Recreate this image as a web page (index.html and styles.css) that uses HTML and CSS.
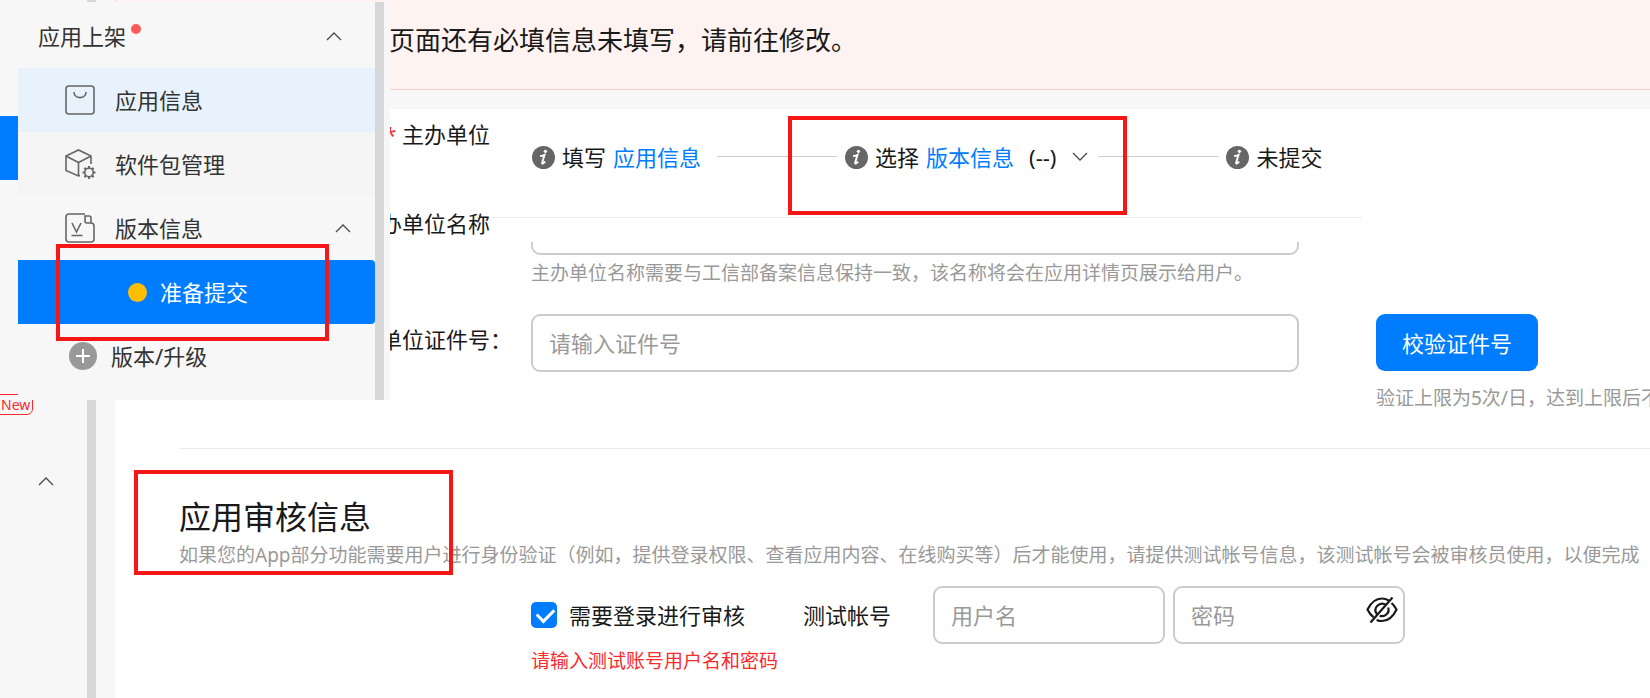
FILE: index.html
```html
<!DOCTYPE html>
<html lang="zh-CN">
<head>
    <meta charset="UTF-8">
    <meta name="viewport" content="width=device-width, initial-scale=1.0">
    <title>应用上架</title>
    <link rel="stylesheet" href="styles.css">
</head>
<body>
    <div class="page">
        <aside class="rail">
            <div class="rail-active"></div>
            <span class="badge-new">New</span>
            <svg class="chevron rail-chevron" viewBox="0 0 16 10"><path d="M1 9 8 2l7 7"/></svg>
        </aside>
        <div class="scrollbar"></div>

        <main class="main">
            <div class="alert">页面还有必填信息未填写，请前往修改。</div>

            <div class="content">
                <div class="top">
                    <div class="top-labels">
                        <span><span class="required">*</span> 主办单位</span>
                        <label for="org-name">主办单位名称</label>
                    </div>
                    <div class="steps">
                        <div class="step">
                            <svg class="info" viewBox="0 0 24 24"><circle cx="12" cy="12" r="12"/><circle class="mark" cx="14" cy="5.500" r="1.7"/><path d="M8.500 10.500c1.800-.2 3.200-.8 4.600-1.300l-2.500 8.300c-.3 1.500 1.200.9 3.200-1.200"/></svg>
                            <span>填写</span><a href="#">应用信息</a>
                        </div>
                        <div class="line"></div>
                        <div class="step">
                            <svg class="info" viewBox="0 0 24 24"><circle cx="12" cy="12" r="12"/><circle class="mark" cx="14" cy="5.500" r="1.7"/><path d="M8.500 10.500c1.800-.2 3.200-.8 4.600-1.300l-2.500 8.300c-.3 1.500 1.200.9 3.200-1.200"/></svg>
                            <span>选择</span><a href="#">版本信息</a>
                            <button type="button" class="version">(--) <svg class="chevron" viewBox="0 0 16 10"><path d="m1 1 7 7 7-7"/></svg></button>
                            <div class="mark-box mark-step"></div>
                        </div>
                        <div class="line"></div>
                        <div class="step">
                            <svg class="info" viewBox="0 0 24 24"><circle cx="12" cy="12" r="12"/><circle class="mark" cx="14" cy="5.500" r="1.7"/><path d="M8.500 10.500c1.800-.2 3.200-.8 4.600-1.300l-2.500 8.300c-.3 1.500 1.200.9 3.200-1.200"/></svg>
                            <span>未提交</span>
                        </div>
                    </div>
                </div>

                <!-- only the lower edge of this field shows under the steps -->
                <div class="name-field">
                    <div class="name-clip"><input type="text" id="org-name" class="input"></div>
                    <p class="hint">主办单位名称需要与工信部备案信息保持一致，该名称将会在应用详情页展示给用户。</p>
                </div>

                <div class="id-row">
                    <label class="id-label" for="org-id">主办单位证件号：</label>
                    <input type="text" id="org-id" class="input id-input" placeholder="请输入证件号">
                    <div class="verify">
                        <button type="button" class="btn">校验证件号</button>
                        <p class="hint">验证上限为5次/日，达到上限后不</p>
                    </div>
                </div>

                <section class="review">
                    <div class="mark-box mark-review"></div>
                    <h2>应用审核信息</h2>
                    <p class="hint">如果您的App部分功能需要用户进行身份验证（例如，提供登录权限、查看应用内容、在线购买等）后才能使用，请提供测试帐号信息，该测试帐号会被审核员使用，以便完成</p>
                    <div class="account">
                        <label class="check"><input type="checkbox" checked>需要登录进行审核</label>
                        <label class="account-label" for="user">测试帐号</label>
                        <input type="text" id="user" class="input account-input" placeholder="用户名">
                        <div class="password account-input">
                            <input type="password" class="input" placeholder="密码" aria-label="密码">
                            <button type="button" class="eye" aria-label="显示密码">
                                <svg viewBox="0 0 32 28"><path d="M22.5 4.3C20.700 3.300 18.500 2.500 16 2.500 9.500 2.500 5 6.500 1.500 13.500c1.500 3.200 3.500 5.800 6 7.700M25.500 7c2 1.700 3.600 3.900 5 6.500-3.500 7.500-8 11.500-14.500 11.500-2 0-3.800-.4-5.400-1.100M19.500 8.700a6.500 6.500 0 0 0-8.800 9.200M22.200 11.500a6.500 6.500 0 0 1-8.500 8.200M26.500 1.500 4.500 26.500"/></svg>
                            </button>
                        </div>
                    </div>
                    <p class="error">请输入测试账号用户名和密码</p>
                </section>
            </div>
        </main>

        <nav class="menu">
            <div class="menu-list">
                <div class="menu-head">
                    <span class="menu-title">应用上架</span>
                    <svg class="chevron" viewBox="0 0 16 10"><path d="M1 9 8 2l7 7"/></svg>
                </div>
                <a href="#" class="menu-item hover">
                    <svg class="icon" viewBox="0 0 30 30"><rect x="1" y="1" width="28" height="28" rx="3"/><path d="M9 7c0 7.500 12 7.500 12 0"/></svg>
                    应用信息
                </a>
                <a href="#" class="menu-item shade">
                    <svg class="icon" viewBox="0 0 30 30"><path d="M15 26.500 13.500 27 1 21.500V7L13.500 1 26 7v8M1 7l12.500 6.500L26 7M13.500 13.500V27"/><circle cx="24" cy="23.500" r="4.200"/><path stroke-width="2.200" d="M24 17v2.300M24 27.700V30M17.500 23.500h2.300M28.200 23.500h2.300M19.400 18.900l1.600 1.600M27 26.500l1.600 1.600M28.600 18.900 27 20.500M21 26.500l-1.600 1.600"/></svg>
                    软件包管理
                </a>
                <a href="#" class="menu-item">
                    <svg class="icon" viewBox="0 0 30 30"><path d="M20 1H4a3 3 0 0 0-3 3v22a3 3 0 0 0 3 3h22a3 3 0 0 0 3-3V13a3 3 0 0 0-3-3h-4a2 2 0 0 1-2-2V3h4a2 2 0 0 1 2 2v5M7 10l4.500 9 4.500-9M6.500 22.500h11"/></svg>
                    版本信息
                    <svg class="chevron" viewBox="0 0 16 10"><path d="M1 9 8 2l7 7"/></svg>
                </a>
                <a href="#" class="menu-item active">
                    <span class="dot"></span>
                    准备提交
                    <span class="mark-box mark-menu"></span>
                </a>
                <a href="#" class="menu-item add">
                    <svg class="plus" viewBox="0 0 28 28"><circle cx="14" cy="14" r="14"/><path d="M7 14h14M14 7v14"/></svg>
                    版本/升级
                </a>
            </div>
            <div class="scrollbar"></div>
        </nav>
    </div>
</body>
</html>
```
FILE: styles.css
```css
*{
    box-sizing: border-box;
    margin: 0;
    padding: 0;
}
body{
    font-family: "Noto Sans", "Noto Sans CJK SC", sans-serif;
    font-size: 22px;
    line-height: 30px;
    color: #191919;
    background: #f7f7f7;
}
input,button{
    font: inherit;
    color: inherit;
}
button{
    border: none;
    background: none;
}
a{
    color: #007dff;
    text-decoration: none;
}
.page{
    position: relative;
    display: flex;
    min-height: 100vh;
    overflow: hidden;
    white-space: nowrap;
}
.scrollbar{
    flex: none;
    width: 9px;
    background: #d7d7d9;
}
.chevron{
    width: 16px;
    height: 10px;
    fill: none;
    stroke: #4a4a4a;
    stroke-width: 1.3;
}

/* left rail */
.rail{
    flex: none;
    width: 87px;
    padding-top: 116px;
    display: flex;
    flex-direction: column;
    align-items: flex-start;
}
.rail-active{
    width: 100%;
    height: 64px;
    background: #007dff;
}
.badge-new{
    margin: 214px 0 61px -6px;
    padding: 0 2px 0 6px;
    border: 1px solid #fa2a2d;
    border-radius: 6px;
    color: #fa2a2d;
    font-size: 14px;
    line-height: 19px;
}
.rail-chevron{
    margin-left: 38px;
}

/* main column */
.main{
    flex: 1;
    min-width: 0;
    margin-left: 19px;
    display: flex;
    flex-direction: column;
}
.alert{
    height: 90px;
    padding: 23px 0 0 273px;
    border-left: 1px solid #f9cfcd;
    border-bottom: 1px solid #f9cfcd;
    background: #fef3f1;
    font-size: 26px;
    line-height: 34px;
}
.content{
    flex: 1;
    margin-top: 19px;
    background: #fff;
}
.top{
    display: flex;
    height: 133px;
}
.top-labels{
    flex: none;
    width: 377px;
    padding: 10px 2px 0 0;
    display: flex;
    flex-direction: column;
    align-items: flex-end;
    gap: 59px;
}
.required{
    color: #fa2a2d;
}
.steps{
    flex: 0 1 870px;
    height: 109px;
    padding: 33px 0 0 40px;
    display: flex;
    align-items: flex-start;
    gap: 8px;
    border-bottom: 1px solid #ebebeb;
}
.step{
    position: relative;
    display: flex;
    align-items: center;
    gap: 7px;
}
.info{
    width: 23px;
    height: 23px;
    fill: #666;
}
.info .mark{
    fill: #fff;
}
.info path{
    fill: none;
    stroke: #fff;
    stroke-width: 2;
}
.line{
    flex: 0 1 120px;
    height: 1px;
    margin-top: 14px;
    background: #ccc;
}
.step:first-child{
    margin-right: 8px;
}
.version{
    display: flex;
    align-items: center;
    gap: 16px;
    padding: 0 2px 0 8px;
}
.name-field{
    padding-left: 416px;
}
.name-clip{
    display: flex;
    align-items: flex-end;
    max-width: 768px;
    height: 13px;
    overflow: hidden;
}
.input{
    width: 100%;
    height: 58px;
    flex-shrink: 0;
    padding: 0 16px;
    border: 2px solid #ccc;
    border-radius: 9px;
    background: #fff;
    outline: none;
}
.input::placeholder{
    color: #999;
    opacity: 1;
}
.hint{
    color: #999;
    font-size: 19px;
    line-height: 26px;
}
.name-field .hint{
    margin-top: 5px;
}
.id-row{
    display: flex;
    align-items: flex-start;
    margin-top: 28px;
}
.id-label{
    flex: none;
    width: 397px;
    margin: 10px 19px 0 0;
    text-align: right;
}
.id-input{
    flex: 0 1 768px;
}
.verify{
    flex: 1 1 0;
    min-width: 0;
    margin-left: 77px;
}
.btn{
    height: 57px;
    padding: 0 26px;
    border-radius: 9px;
    background: #007dff;
    color: #fff;
}
.verify .hint{
    margin-top: 14px;
}

/* review section */
.review{
    position: relative;
    margin: 37px 0 0 64px;
    padding-top: 46px;
    border-top: 1px solid #ebebeb;
}
.review h2{
    font-size: 32px;
    font-weight: 400;
    line-height: 44px;
}
.review .hint{
    margin-top: 3px;
}
.account{
    display: flex;
    align-items: center;
    margin: 18px 0 0 352px;
}
.check{
    display: flex;
    align-items: center;
    gap: 12px;
}
.check input{
    appearance: none;
    width: 26px;
    height: 26px;
    border-radius: 5px;
    background: #007dff;
}
.check input:checked::before{
    content: "";
    display: block;
    width: 8px;
    height: 14px;
    margin: 3px 0 0 9px;
    border: solid #fff;
    border-width: 0 3px 3px 0;
    transform: rotate(45deg);
}
.account-label{
    margin: 0 42px 0 58px;
}
.account-input{
    flex: 0 1 232px;
    min-width: 0;
    margin-right: 8px;
}
.password{
    position: relative;
}
.eye{
    position: absolute;
    top: 10px;
    right: 7px;
    height: 28px;
}
.eye svg{
    display: block;
    width: 32px;
    height: 28px;
    fill: none;
    stroke: #191919;
    stroke-width: 2.2;
}
.error{
    margin-top: 4px;
    padding-left: 352px;
    color: #fa2a2d;
    font-size: 19px;
    line-height: 26px;
}

/* floating side menu */
.menu{
    position: absolute;
    top: 2px;
    left: 18px;
    display: flex;
    width: 372px;
    height: 398px;
    background: #f7f7f7;
}
.menu-list{
    flex: 1;
}
.menu .scrollbar{
    margin-right: 6px;
}
.menu-head{
    display: flex;
    align-items: center;
    justify-content: space-between;
    height: 66px;
    padding: 2px 33px 0 20px;
}
.menu-title{
    position: relative;
    color: #333;
}
.menu-title::after{
    content: "";
    position: absolute;
    top: 3px;
    right: -15px;
    width: 10px;
    height: 10px;
    border-radius: 50%;
    background: #ff5a5a;
}
.menu-item{
    position: relative;
    display: flex;
    align-items: center;
    gap: 20px;
    height: 64px;
    padding: 0 24px 0 47px;
    color: #333;
}
.menu-item .chevron{
    margin-left: auto;
}
.icon{
    width: 30px;
    height: 30px;
    overflow: visible;
    fill: none;
    stroke: #666;
    stroke-width: 1.6;
}
.hover{
    background: #e7f2fc;
}
.shade{
    background: #f5f5f5;
}
.active{
    gap: 13px;
    padding-left: 110px;
    border-radius: 0 4px 4px 0;
    background: #007dff;
    color: #fff;
}
.dot{
    width: 19px;
    height: 19px;
    border-radius: 50%;
    background: #ffbf00;
}
.add{
    gap: 14px;
    padding-left: 51px;
}
.plus{
    width: 28px;
    height: 28px;
    fill: #999;
}
.plus path{
    stroke: #fff;
    stroke-width: 2;
}

/* red highlight frames */
.mark-box{
    position: absolute;
    border: 4px solid #f51616;
    pointer-events: none;
}
.mark-step{
    top: -26px;
    left: -57px;
    width: 339px;
    height: 99px;
}
.mark-review{
    top: 21px;
    left: -45px;
    width: 319px;
    height: 105px;
}
.mark-menu{
    top: -16px;
    left: 38px;
    width: 273px;
    height: 97px;
}
```
